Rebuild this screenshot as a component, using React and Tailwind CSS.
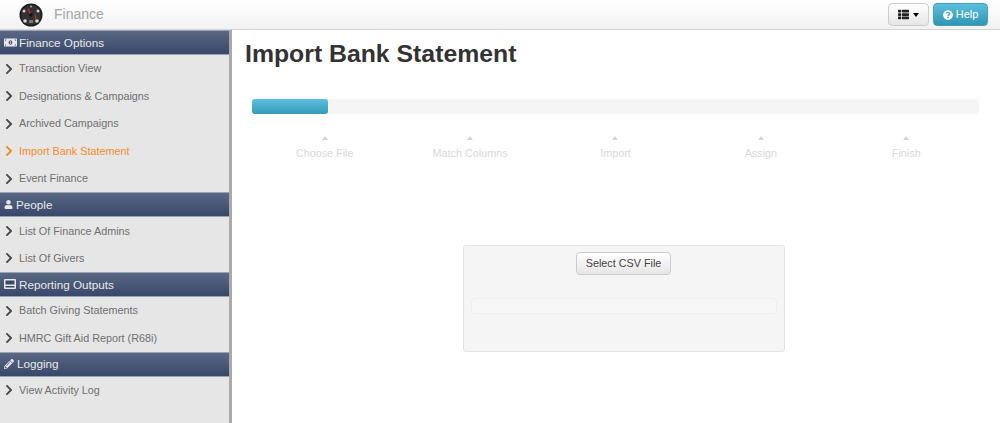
import React from 'react';
import { FaChevronRight, FaMoneyBillAlt, FaUser, FaPencilAlt, FaThList, FaQuestionCircle } from 'react-icons/fa';

const ReportIcon = ({ className }) => (
    <svg className={className} viewBox="0 0 12 10">
        <rect x="0" y="0" width="12" height="10" rx="1" fill="#e8e8e8" />
        <rect x="1.5" y="1.5" width="9" height="4" fill="#39486a" />
        <rect x="1.5" y="7" width="9" height="1.5" fill="#39486a" />
    </svg>
);

const sections = [
    { title: 'Finance Options', icon: FaMoneyBillAlt, iconClass: 'w-[13px] h-[13px] mr-[2px]', items: ['Transaction View', 'Designations & Campaigns', 'Archived Campaigns', 'Import Bank Statement', 'Event Finance'] },
    { title: 'People', icon: FaUser, iconClass: 'w-[9px] h-[9px] mr-[3px]', items: ['List Of Finance Admins', 'List Of Givers'] },
    { title: 'Reporting Outputs', icon: ReportIcon, iconClass: 'w-[12px] h-[10px] mr-[3px]', items: ['Batch Giving Statements', 'HMRC Gift Aid Report (R68i)'] },
    { title: 'Logging', icon: FaPencilAlt, iconClass: 'w-[10px] h-[10px] mr-[3px]', items: ['View Activity Log'] },
];

const steps = ['Choose File', 'Match Columns', 'Import', 'Assign', 'Finish'];

const Logo = () => (
    <svg width="24" height="24" viewBox="0 0 24 24">
        <circle cx="12" cy="12" r="11.5" fill="#1c1c1c" />
        <circle cx="12" cy="12" r="10" fill="#333" />
        <circle cx="5" cy="8" r="1.5" fill="#cfcfcf" />
        <circle cx="19" cy="8" r="1.5" fill="#cfcfcf" />
        <circle cx="12" cy="3.5" r="1" fill="#aaa" />
        <circle cx="6" cy="18" r="1.8" fill="#d8d8d8" />
        <circle cx="18" cy="18" r="1.8" fill="#d8d8d8" />
        <path d="M12 12 L9 6" stroke="#c33" strokeWidth="1.2" />
        <path d="M16 11 L17 17" stroke="#c33" strokeWidth="1" />
        <circle cx="12" cy="12" r="1.8" fill="#111" />
        <path d="M10 17h4v3h-4z" fill="#777" />
    </svg>
);

export default function App() {
    return (
        <div className="h-[423px] w-[1000px] overflow-hidden bg-white font-['Liberation_Sans',Arial,sans-serif]">
            <div className="flex h-[30px] items-center border-b border-[#d4d4d4] bg-gradient-to-b from-white to-[#f2f2f2] pr-[12px] pl-[19px]">
                <Logo />
                <span className="ml-[11px] text-[14px] text-[#a6a6a6]">Finance</span>
                <div className="ml-auto flex gap-[4px]">
                    <button className="flex h-[23px] w-[41px] items-center justify-center gap-[4px] rounded-[4px] border border-[#ccc] bg-gradient-to-b from-white to-[#e6e6e6] text-[#222]">
                        <FaThList className="h-[11px] w-[11px]" />
                        <span className="h-0 w-0 border-x-[3.5px] border-t-[4px] border-x-transparent border-t-black" />
                    </button>
                    <button className="flex h-[23px] w-[55px] items-center justify-center gap-[3px] rounded-[4px] border border-[#46a3bd] bg-gradient-to-b from-[#5bc0de] to-[#2f96b4] text-[11px] text-white">
                        <FaQuestionCircle className="h-[10px] w-[10px]" />
                        Help
                    </button>
                </div>
            </div>

            <div className="flex h-[393px]">
                <aside className="w-[232px] shrink-0 border-r-[3px] border-[#a9a9a9] bg-[#e6e6e6]">
                    {sections.map((section) => (
                        <div key={section.title}>
                            <div className="flex h-[24.75px] items-center border-y border-[#9aa3b3] bg-gradient-to-b from-[#5a6884] to-[#39486a] pl-[4px] text-[11.7px] text-[#e8e8e8]">
                                <section.icon className={section.iconClass} />
                                {section.title}
                            </div>
                            {section.items.map((item) => {
                                const active = item === 'Import Bank Statement';
                                return (
                                    <div key={item} className={`flex h-[27.5px] items-center pl-[5px] text-[10.8px] ${active ? 'text-[#f28c1e]' : 'text-[#707070]'}`}>
                                        <FaChevronRight className={`mr-[6px] h-[12px] w-[8px] ${active ? 'text-[#f28c1e]' : 'text-[#4a4a4a]'}`} />
                                        {item}
                                    </div>
                                );
                            })}
                        </div>
                    ))}
                </aside>

                <main className="flex-1 pt-[8px] pr-[21px] pl-[13px]">
                    <h1 className="text-[24.8px] leading-[32px] font-bold text-[#333]">Import Bank Statement</h1>

                    <div className="mt-[29px] ml-[7px] h-[15px] w-[727px] rounded-[3px] bg-[#f5f5f5]">
                        <div className="h-[15px] w-[76px] rounded-[3px] bg-gradient-to-b from-[#5bc0de] to-[#339bb9]" />
                    </div>

                    <div className="mt-[22px] ml-[7px] flex w-[727px]">
                        {steps.map((step) => (
                            <div key={step} className="flex w-[145.4px] flex-col items-center text-[10.8px] leading-[14px] text-[#d8d8d8]">
                                <span className="mb-[6px] h-0 w-0 border-x-[3.5px] border-b-[4px] border-x-transparent border-b-[#d4d4d4]" />
                                {step}
                            </div>
                        ))}
                    </div>

                    <div className="mt-[85px] ml-[218px] flex h-[107px] w-[322px] flex-col items-center rounded-[3px] border border-[#e3e3e3] bg-[#f5f5f5] px-[7px] pt-[6px]">
                        <button className="mr-[1px] h-[23px] w-[95px] rounded-[4px] border border-[#ccc] bg-gradient-to-b from-white to-[#e6e6e6] text-[10.8px] text-[#444]">Select CSV File</button>
                        <div className="mt-[23px] h-[16px] w-full rounded-[4px] border border-[#eeeeee] bg-[#f7f7f7]" />
                    </div>
                </main>
            </div>
        </div>
    );
}
